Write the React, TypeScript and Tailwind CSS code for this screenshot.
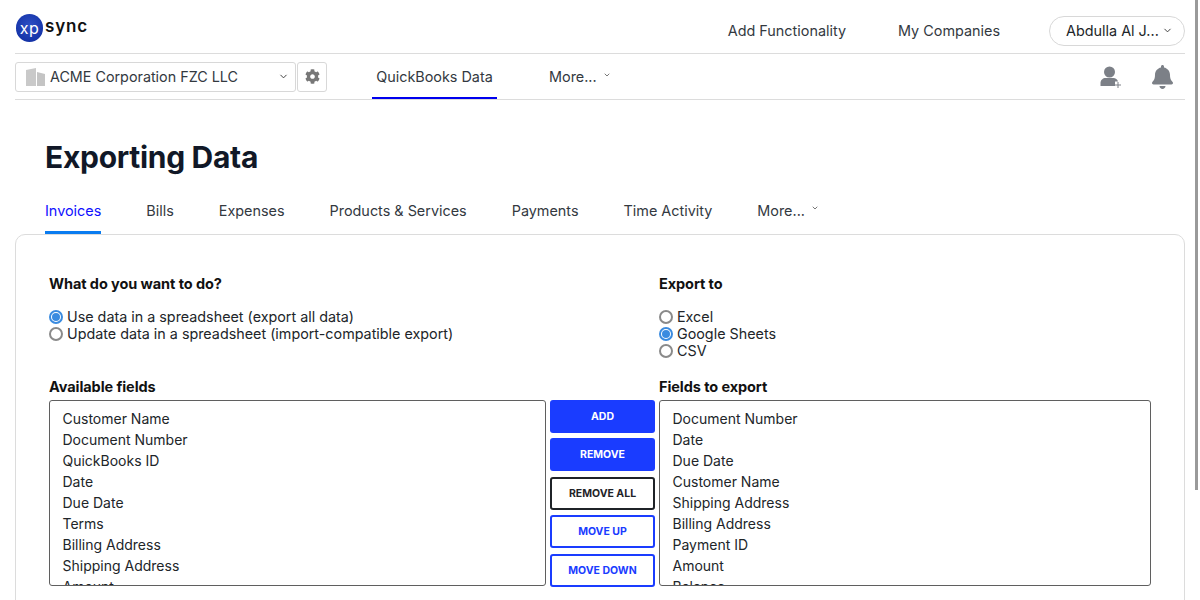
import { ChevronDown } from 'lucide-react';
import { FaBell, FaCog } from 'react-icons/fa';

const availableFields = [
  'Customer Name',
  'Document Number',
  'QuickBooks ID',
  'Date',
  'Due Date',
  'Terms',
  'Billing Address',
  'Shipping Address',
  'Amount',
];

const exportFields = [
  'Document Number',
  'Date',
  'Due Date',
  'Customer Name',
  'Shipping Address',
  'Billing Address',
  'Payment ID',
  'Amount',
  'Balance',
];

const tabs = ['Invoices', 'Bills', 'Expenses', 'Products & Services', 'Payments', 'Time Activity'];

const Radio = ({ checked, label }: { checked?: boolean; label: string }) => (
  <label className="flex items-center h-[17px] text-[14.33px] text-[#212529]">
    <span
      className={`w-[14px] h-[14px] mr-[4px] rounded-full flex items-center justify-center bg-white ${
        checked ? 'border-2 border-[#3a8be0]' : 'border-2 border-[#8a8a8a]'
      }`}
    >
      {checked && <span className="w-[8px] h-[8px] rounded-full bg-[#3a8be0]" />}
    </span>
    {label}
  </label>
);

const FieldList = ({ items, className }: { items: string[]; className: string }) => (
  <div className={`h-[186px] overflow-hidden border border-[#5f5f5f] rounded-[3px] pt-[7px] pl-[12.5px] ${className}`}>
    {items.map(item => (
      <div key={item} className="h-[21px] leading-[21px] text-[14px] text-[#212529] whitespace-nowrap">
        {item}
      </div>
    ))}
  </div>
);

const ActionButton = ({ label, className }: { label: string; className: string }) => (
  <button className={`w-[105px] h-[33px] rounded-[3px] text-[10.5px] font-bold flex items-center justify-center ${className}`}>
    {label}
  </button>
);

const App = () => {
  return (
    <div className="relative w-[1200px] h-[600px] overflow-hidden bg-white font-['Inter',sans-serif]">
      <div className="w-[1170px] ml-[15px]">
        {/* Top bar */}
        <div className="h-[54px] border-b border-[#dcdcdc] flex items-center justify-between">
          <div className="flex items-center mt-[3px]">
            <div className="w-[27px] h-[28px] ml-[1px] rounded-full bg-[radial-gradient(circle_at_50%_40%,#2d4fc4,#0c2a9e)] flex items-center justify-center text-white text-[16px] leading-none tracking-[0.4px] pb-[1px]">
              xp
            </div>
            <span className="ml-[2px] text-[17px] font-semibold tracking-[0.8px] text-[#111] leading-none mb-[3px]">sync</span>
          </div>
          <div className="flex items-center text-[14.4px] text-[#33393f] mt-[8px]">
            <span className="mr-[52px]">Add Functionality</span>
            <span className="mr-[49px]">My Companies</span>
            <div className="w-[136px] h-[30px] border border-[#d8d8d8] rounded-full flex items-center pl-[16px] text-[#212529]">
              Abdulla Al J...
              <ChevronDown className="w-[11px] h-[11px] ml-[3px] text-[#333]" strokeWidth={2} />
            </div>
          </div>
        </div>

        {/* Company bar */}
        <div className="h-[46px] border-b border-[#dcdcdc] flex items-center">
          <div className="w-[281px] h-[30px] border border-[#d8d8d8] rounded-[3px] flex items-center pl-[9px] text-[14.33px] text-[#33393f]">
            <svg width="21" height="20" viewBox="0 0 21 20" className="mr-[4px]">
              <path d="M1 19V3l10-2v18z" fill="#c9c9c9" />
              <path d="M12 19V5l8 2v12z" fill="#c4c4c4" />
            </svg>
            ACME Corporation FZC LLC
            <ChevronDown className="w-[11px] h-[11px] ml-auto mr-[6px] text-[#333]" strokeWidth={2} />
          </div>
          <div className="w-[30px] h-[30px] ml-[1px] border border-[#d8d8d8] rounded-[3px] flex items-center justify-center">
            <FaCog className="w-[15px] h-[15px] text-[#777]" />
          </div>
          <div className="ml-[45px] w-[125px] h-full flex items-center justify-center border-b-2 border-[#0000ee] text-[14.4px] text-[#33393f] pt-[2px]">
            QuickBooks Data
          </div>
          <div className="ml-[52px] flex items-center text-[14.4px] text-[#33393f]">
            More...
            <ChevronDown className="w-[8px] h-[8px] ml-[6px] mb-[3px] text-[#333]" strokeWidth={2} />
          </div>
          <div className="ml-auto flex items-center mr-[12px]">
            <svg width="22" height="24" viewBox="0 0 22 24" className="mr-[30px]">
              <circle cx="9.500" cy="7" r="5.500" fill="#7c8087" />
              <path d="M0.500 21v-3C0.500 15 3 13 5.500 13h8c2 0 4 1.500 4.500 3.500H15v4.500z" fill="#7c8087" />
              <path d="M18 17v6M15 20h6" stroke="#7c8087" strokeWidth="1" />
            </svg>
            <FaBell className="w-[21px] h-[24px] text-[#7c8087]" />
          </div>
        </div>

        <h1 className="ml-[30px] mt-[38px] text-[30px] leading-[38px] font-bold text-[#111827] tracking-[-0.3px]">Exporting Data</h1>

        {/* Section tabs */}
        <div className="ml-[30px] mt-[22px] h-[36px] flex text-[14.4px] text-[#33393f]">
          {tabs.map((tab, i) => (
            <div
              key={tab}
              className={`mr-[45px] pt-[2px] ${i === 0 ? 'text-[#1010ff] border-b-[3px] border-[#0a7cf0]' : ''}`}
            >
              {tab}
            </div>
          ))}
          <div className="pt-[2px] flex items-start">
            More...
            <ChevronDown className="w-[8px] h-[8px] ml-[6px] mt-[4px] text-[#333]" strokeWidth={2} />
          </div>
        </div>

        {/* Export form */}
        <div className="h-[400px] border border-[#dcdcdc] rounded-t-[10px] pl-[33px] pt-[40px]">
          <div className="flex h-[103px]">
            <div className="w-[610px]">
              <div className="text-[14.5px] font-bold tracking-[-0.08px] text-[#111] leading-[18px] mb-[15px]">What do you want to do?</div>
              <Radio checked label="Use data in a spreadsheet (export all data)" />
              <Radio label="Update data in a spreadsheet (import-compatible export)" />
            </div>
            <div>
              <div className="text-[14.5px] font-bold tracking-[-0.08px] text-[#111] leading-[18px] mb-[15px]">Export to</div>
              <Radio label="Excel" />
              <Radio checked label="Google Sheets" />
              <Radio label="CSV" />
            </div>
          </div>
          <div className="flex text-[14.5px] font-bold tracking-[-0.08px] text-[#111] leading-[18px] mb-[4px]">
            <div className="w-[610px]">Available fields</div>
            <div>Fields to export</div>
          </div>
          <div className="flex">
            <FieldList items={availableFields} className="w-[497px]" />
            <div className="w-[105px] ml-[4px] flex flex-col">
              <ActionButton label="ADD" className="bg-[#1a3cff] text-white" />
              <ActionButton label="REMOVE" className="bg-[#1a3cff] text-white mt-[5px]" />
              <ActionButton label="REMOVE ALL" className="border-2 border-[#1f2328] text-[#1f2328] mt-[6px]" />
              <ActionButton label="MOVE UP" className="border-2 border-[#1a3cff] text-[#1a3cff] mt-[5px]" />
              <ActionButton label="MOVE DOWN" className="border-2 border-[#1a3cff] text-[#1a3cff] mt-[6px]" />
            </div>
            <FieldList items={exportFields} className="w-[492px] ml-[4px]" />
          </div>
        </div>
      </div>

      {/* Page scrollbar thumb */}
      <div className="absolute top-0 right-[2px] w-[3px] h-[490px] bg-[#9a9a9a]" />
    </div>
  );
};

export default App;
